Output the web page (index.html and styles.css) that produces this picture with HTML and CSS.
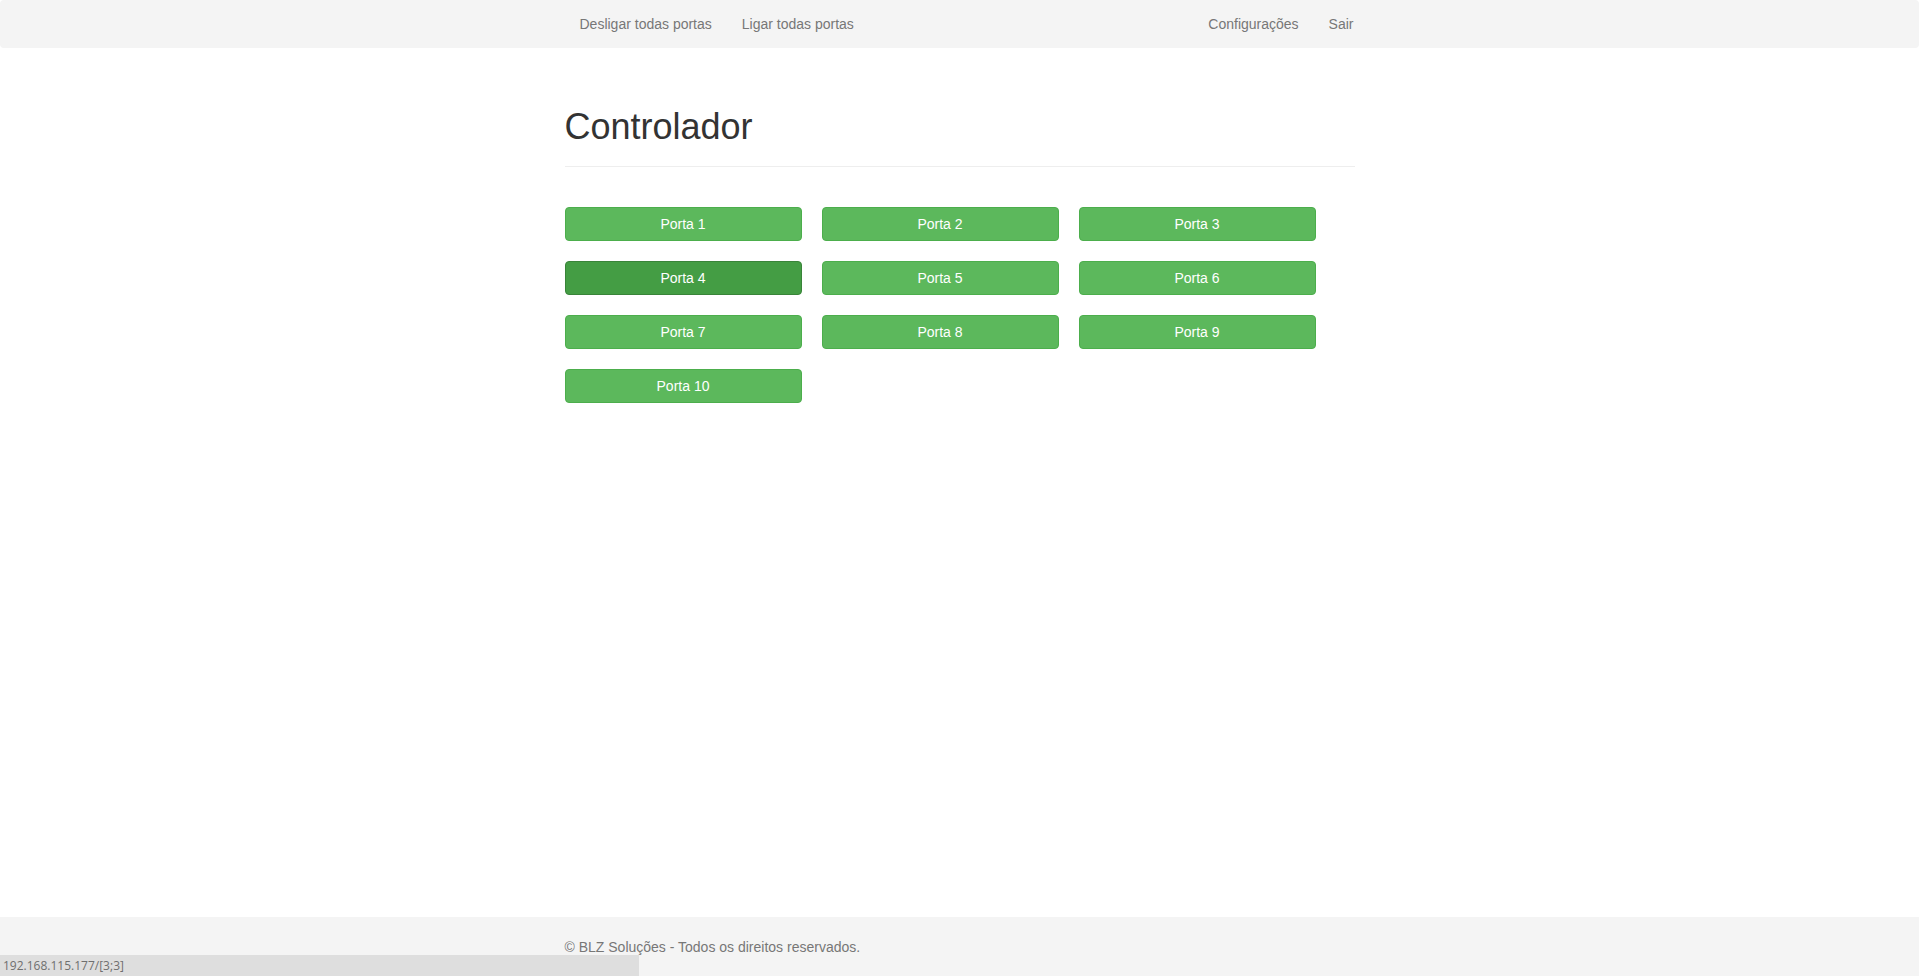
FILE: index.html
```html
<!DOCTYPE html>
<html lang="pt-BR">
<head>
<meta charset="utf-8">
<title>Controlador</title>
<link rel="stylesheet" href="styles.css">
</head>
<body>
<nav class="navbar">
  <div class="container nav-inner">
    <ul class="nav">
      <li><a href="#">Desligar todas portas</a></li>
      <li><a href="#">Ligar todas portas</a></li>
    </ul>
    <ul class="nav nav-right">
      <li><a href="#">Configurações</a></li>
      <li><a href="#">Sair</a></li>
    </ul>
  </div>
</nav>
<main class="main">
  <div class="container">
    <div class="page-header">
      <h1>Controlador</h1>
    </div>
    <div class="ports">
      <button class="btn">Porta 1</button>
      <button class="btn">Porta 2</button>
      <button class="btn">Porta 3</button>
      <button class="btn active">Porta 4</button>
      <button class="btn">Porta 5</button>
      <button class="btn">Porta 6</button>
      <button class="btn">Porta 7</button>
      <button class="btn">Porta 8</button>
      <button class="btn">Porta 9</button>
      <button class="btn">Porta 10</button>
    </div>
  </div>
</main>
<footer class="footer">
  <div class="container">
    <p class="footer-text">© BLZ Soluções - Todos os direitos reservados.</p>
  </div>
</footer>
<div class="statusbar">192.168.115.177/[3;3]</div>
</body>
</html>
```

FILE: styles.css
```css
* { box-sizing: border-box; }
html, body { margin: 0; padding: 0; }
body {
  font-family: "Liberation Sans", Arial, Helvetica, sans-serif;
  font-size: 14px;
  line-height: 20px;
  color: #333;
  background: #fff;
  min-height: 100vh;
  display: flex;
  flex-direction: column;
}
.container {
  width: 820px;
  margin: 0 auto;
  padding: 0 15px;
}
.navbar {
  background: #f4f4f4;
  border-radius: 4px;
  height: 48px;
}
.nav-inner {
  display: flex;
  justify-content: space-between;
}
.nav {
  list-style: none;
  margin: 0;
  padding: 0;
  display: flex;
}
.nav a {
  display: block;
  padding: 14px 15px;
  line-height: 20px;
  color: #777;
  text-decoration: none;
}
.nav-right li:last-child a { padding-right: 1px; }
.main { flex: 1; }
.page-header {
  margin-top: 59px;
  padding-bottom: 19px;
  border-bottom: 1px solid #eee;
}
.page-header h1 {
  margin: 0;
  font-size: 36px;
  line-height: 40px;
  font-weight: 400;
  color: #333;
}
.ports {
  margin-top: 40px;
  display: grid;
  grid-template-columns: repeat(3, 237px);
  column-gap: 20px;
  row-gap: 20px;
}
.btn {
  height: 34px;
  padding: 6px 12px;
  font-family: inherit;
  font-size: 14px;
  line-height: 20px;
  color: #fff;
  background: #5cb85c;
  border: 1px solid #4cae4c;
  border-radius: 4px;
  cursor: pointer;
}
.btn.active {
  background: #449d44;
  border-color: #398439;
}
.footer {
  height: 59px;
  background: #f4f4f4;
}
.footer-text {
  margin: 20px 0 0;
  color: #777;
}
.statusbar {
  position: fixed;
  left: 0;
  bottom: 0;
  width: 639px;
  height: 21px;
  background: #dedede;
  color: #6f6f6f;
  font-family: "Open Sans", "Noto Sans", sans-serif;
  font-size: 12px;
  line-height: 21px;
  padding-left: 3px;
}
```
